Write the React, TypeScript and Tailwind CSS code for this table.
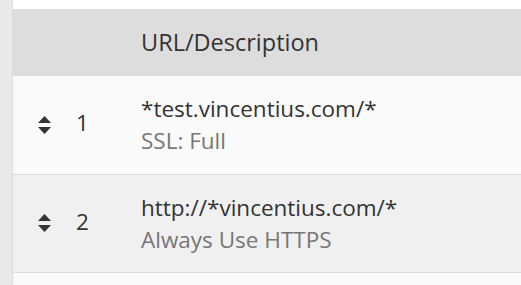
const font = { fontFamily: '"Open Sans", "Noto Sans", sans-serif' };

type Rule = { n: number; url: string; desc: string };

const rules: Rule[] = [
  { n: 1, url: "*test.vincentius.com/*", desc: "SSL: Full" },
  { n: 2, url: "http://*vincentius.com/*", desc: "Always Use HTTPS" },
];

function SortIcon() {
  return (
    <svg width="13" height="18" viewBox="0 0 13 18" className="text-[#333]">
      <path d="M6.5 0 L13 7 L0 7 Z" fill="currentColor" />
      <path d="M0 11 L13 11 L6.5 18 Z" fill="currentColor" />
    </svg>
  );
}

export default function App() {
  return (
    <div className="flex h-[285px] w-[521px] overflow-hidden bg-white" style={font}>
      <aside className="w-[13px] shrink-0 border-r border-[#dcdcdc] bg-[#e9e9e9]" />
      <main className="flex-1 pt-[9px]">
        <table className="w-full border-collapse text-[22.5px]">
          <thead>
            <tr className="h-[67px] bg-[#dddddd] text-left">
              <th className="w-[128px]" />
              <th className="text-[23.5px] font-medium text-[#333]">URL/Description</th>
            </tr>
          </thead>
          <tbody>
            {rules.map((r, i) => (
              <tr
                key={r.n}
                className={
                  "h-[98px] border-b border-[#dddddd] " +
                  (i % 2 ? "bg-[#f0f0f0]" : "bg-[#fafafa]")
                }
              >
                <td>
                  <div className="flex items-center pl-[25px]">
                    <SortIcon />
                    <span className="ml-[25px] -mt-[3px] leading-8 text-[#333]">{r.n}</span>
                  </div>
                </td>
                <td className="pt-[1px] leading-8">
                  <p className="text-[#333]">{r.url}</p>
                  <p className="text-[#777]">{r.desc}</p>
                </td>
              </tr>
            ))}
            <tr className="h-[30px] bg-[#fafafa]">
              <td />
              <td />
            </tr>
          </tbody>
        </table>
      </main>
    </div>
  );
}
